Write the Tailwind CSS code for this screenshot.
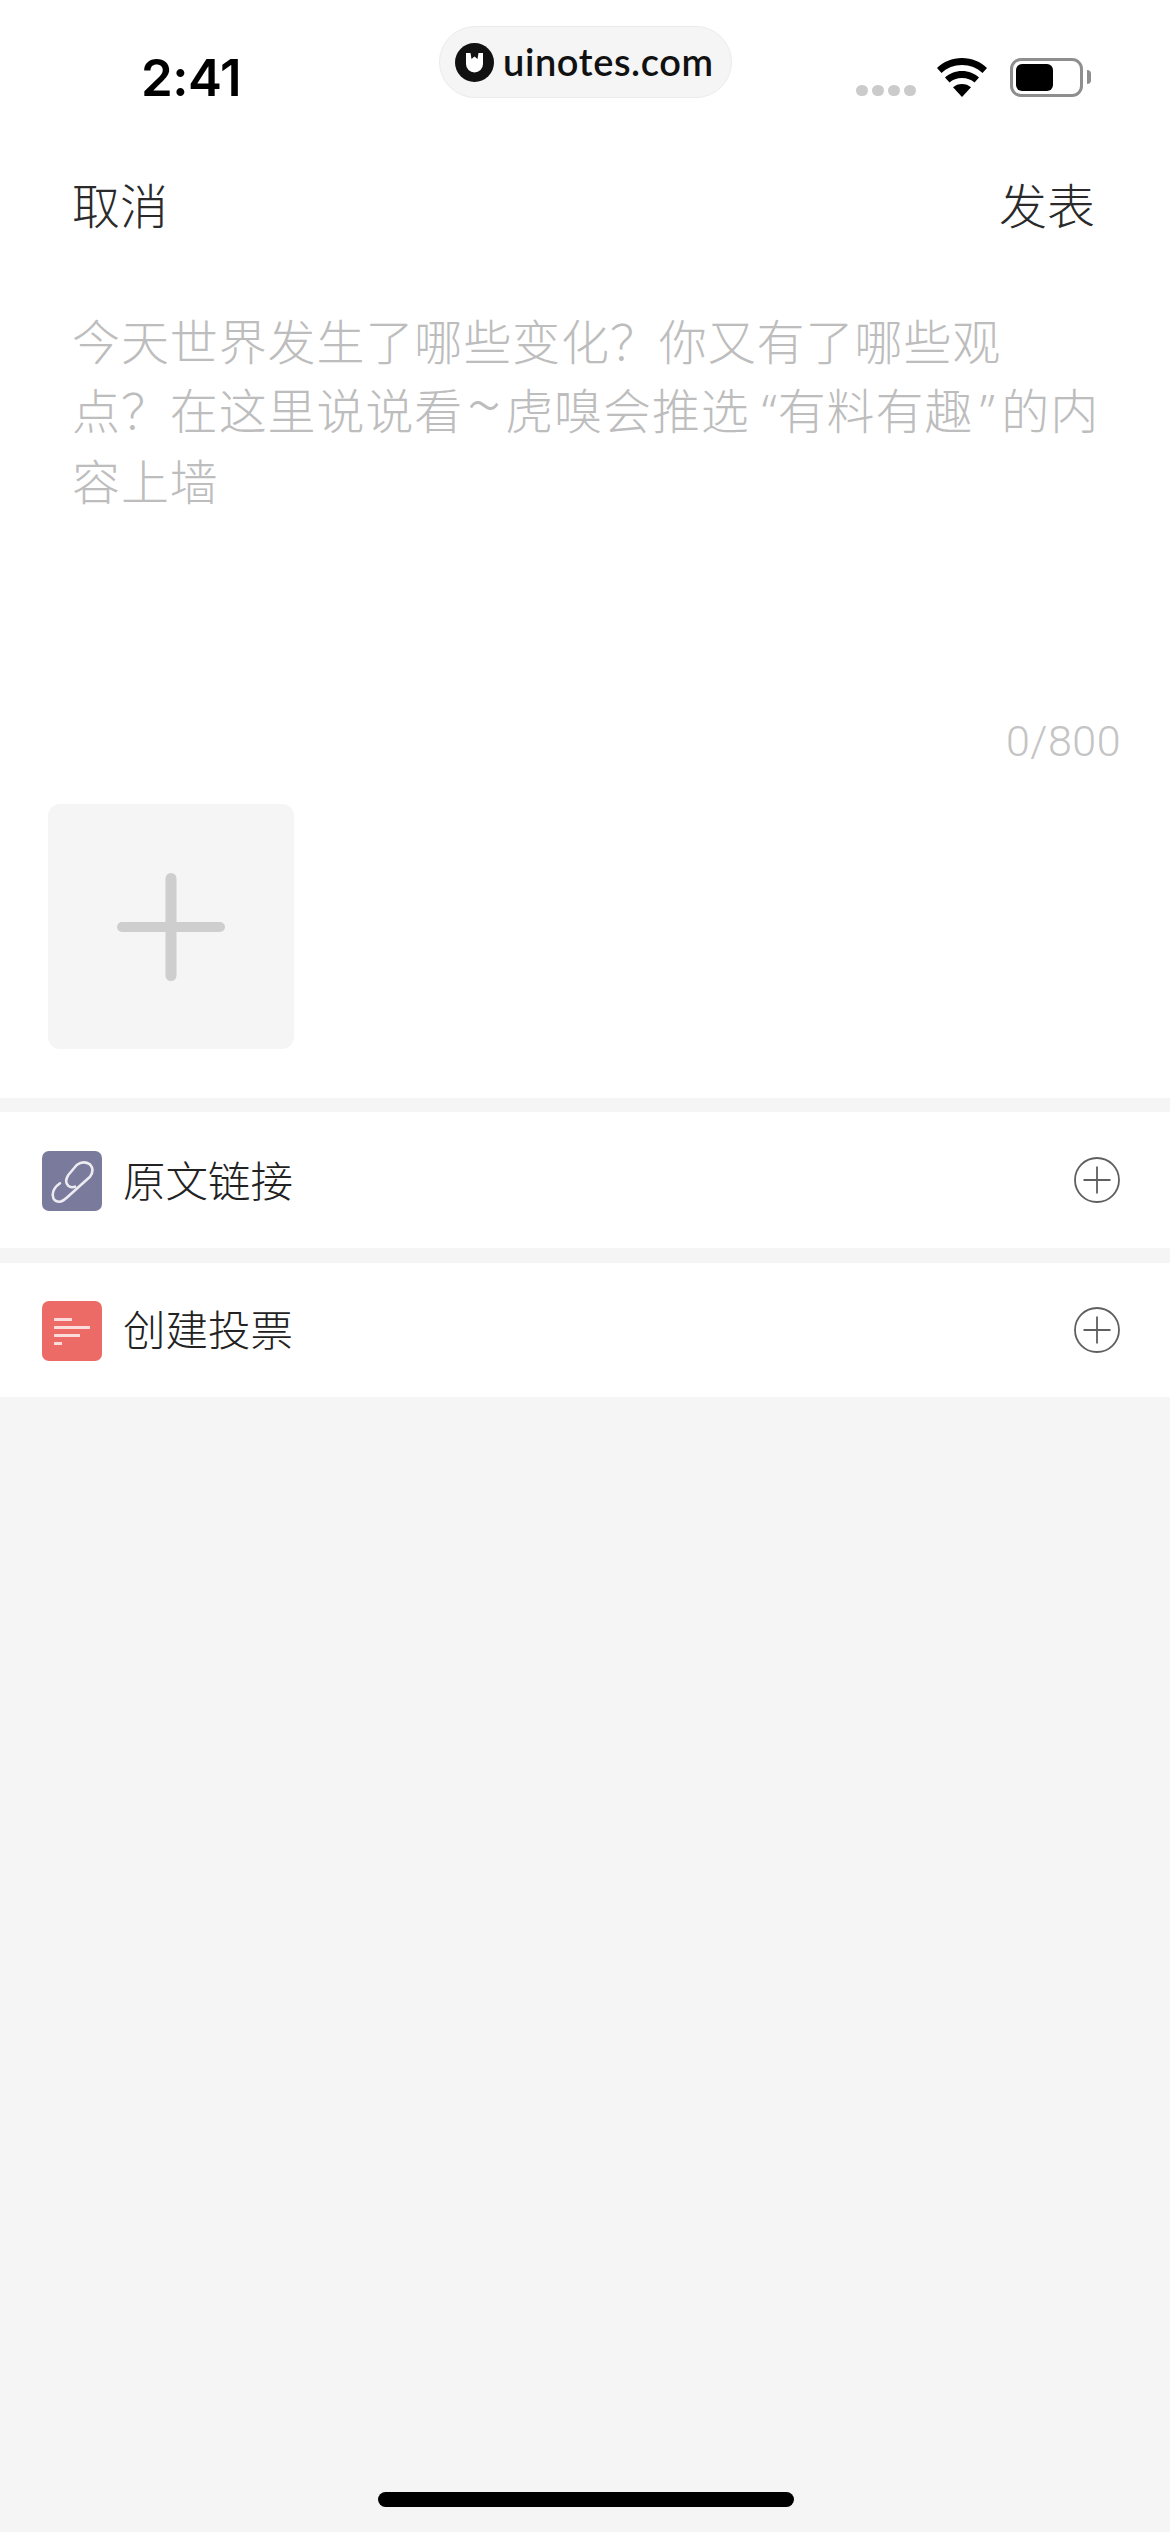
<!doctype html>
<html lang="zh-CN">
<head>
<meta charset="utf-8">
<script src="https://cdn.jsdelivr.net/npm/@tailwindcss/browser@4"></script>
</head>
<body class="m-0 bg-[#f5f5f5] font-['Noto_Sans_CJK_SC','Noto_Sans',sans-serif]">
<div class="relative w-[1170px] h-[2532px] overflow-hidden flex flex-col bg-[#f5f5f5]">
  <div class="bg-white h-[1098px] flex flex-col">
    <div class="relative h-[162px] shrink-0">
      <span class="absolute left-[141px] top-[45px] text-[51px] leading-[66px] font-semibold text-black font-['Inter',sans-serif] tracking-[-0.5px]">2:41</span>
      <div class="absolute left-[439px] top-[26px] w-[293px] h-[72px] rounded-[36px] bg-[#f5f5f5] border border-[#ebebeb] flex items-center pl-[15px] gap-[9px]">
        <svg width="39" height="39" viewBox="0 0 39 39"><circle cx="19.5" cy="19.5" r="19.500" fill="#111"/><path d="M11 10v11a8.500 8.500 0 0 0 17 0V10h-4.500l-1 6-3-2.500-3 2.500-1-6z" fill="#fff"/></svg>
        <span class="text-[38px] leading-[44px] pb-[3px] font-semibold tracking-[0.6px] text-[#111] font-['Lato',sans-serif]">uinotes.com</span>
      </div>
      <div class="absolute left-[856px] top-[85px] flex gap-[4px]">
        <i class="block w-[12px] h-[11px] rounded-full bg-[#cbcbcb]"></i><i class="block w-[12px] h-[11px] rounded-full bg-[#cbcbcb]"></i><i class="block w-[12px] h-[11px] rounded-full bg-[#cbcbcb]"></i><i class="block w-[12px] h-[11px] rounded-full bg-[#cbcbcb]"></i>
      </div>
      <svg class="absolute left-[936px] top-[58px]" width="52" height="39" viewBox="0 0 52 39"><path d="M26 0C16 0 7.500 3.700 1 10l4.500 5C11 9.800 18 7 26 7s15 2.800 20.500 8l4.500-5C44.500 3.700 36 0 26 0z" fill="#000"/><path d="M26 13c-6.800 0-12.500 2.500-17 6.500l4.500 5C16.800 21.500 21 20 26 20s9.200 1.500 12.500 4.500l4.500-5C38.500 15.500 32.800 13 26 13z" fill="#000"/><path d="M26 26c-3.600 0-6.600 1.200-9 3.300L26 39l9-9.700C32.600 27.200 29.600 26 26 26z" fill="#000"/></svg>
      <div class="absolute left-[1010px] top-[58px] w-[73px] h-[39px] rounded-[11px] border-[3px] border-[#8e8e8e] p-[3px]">
        <div class="w-[37px] h-full rounded-[6px] bg-black"></div>
      </div>
      <div class="absolute left-[1087px] top-[70px] w-[4px] h-[14px] rounded-r-full bg-[#8e8e8e]"></div>
    </div>
    <div class="flex justify-between pl-[72px] pr-[75px] h-[80px] text-[48px] leading-[82px] font-light text-[#2a2a2a] shrink-0">
      <span>取消</span><span>发表</span>
    </div>
    <p class="m-0 mt-[63px] pl-[72px] text-[48px] leading-[69px] tracking-[0.9px] font-light text-[#bdbdbd] whitespace-nowrap">今天世界发生了哪些变化&#xFF1F;你又有了哪些观<br>点&#xFF1F;在这里说说看<span class="inline-block w-[42px] text-center tracking-normal text-[64px] leading-[0]">~</span>虎嗅会推选<span class="inline-block w-[28px] text-right pr-[1px] tracking-normal font-['Noto_Sans',sans-serif]">“</span>有料有趣<span class="inline-block w-[28px] text-center tracking-normal font-['Noto_Sans',sans-serif]">”</span>的内<br>容上墙</p>
    <div class="mt-[201px] pr-[49px] text-right text-[43px] leading-[52px] font-light text-[#c4c4c4] font-['Roboto',sans-serif] tracking-[0.5px]">0/800</div>
    <div class="relative mt-[37px] ml-[48px] w-[246px] h-[245px] rounded-[12px] bg-[#f5f5f5] flex items-center justify-center">
      <svg width="108" height="108" viewBox="0 0 108 108"><rect x="0" y="49" width="108" height="10" rx="5" fill="#cecece"/><rect x="48.500" y="0" width="11" height="108" rx="5.500" fill="#cecece"/></svg>
    </div>
  </div>
  <div class="mt-[14px] h-[136px] bg-white flex items-center pl-[42px] pr-[50px] shrink-0">
    <div class="mt-[2px] w-[60px] h-[60px] rounded-[7px] bg-[#7a7a9c] flex items-center justify-center">
      <svg width="60" height="60" viewBox="0 0 60 60" fill="none" stroke="#ecebf2" stroke-width="2.600" stroke-linecap="round" stroke-linejoin="round"><path d="M18 32.300Q10.700 37.300 10.700 44Q11.300 51.300 18 50.700Q21.300 50 24.700 46.700L48 25.700Q53 19 48 13.300Q41.300 9 34.700 14L26.300 24Q22 30.700 26.300 34.700Q29.700 37.300 33 35.700"/></svg>
    </div>
    <span class="ml-[21px] pb-[3px] text-[42.500px] leading-[60px] font-light text-[#222]">原文链接</span>
    <svg class="ml-auto" width="46" height="46" viewBox="0 0 46 46" fill="none" stroke="#5f5f5f" stroke-width="1.800"><circle cx="23" cy="23" r="22"/><path d="M9.500 23h27M23 9.500v27"/></svg>
  </div>
  <div class="mt-[15px] h-[134px] bg-white flex items-center pl-[42px] pr-[50px] shrink-0">
    <div class="mt-[2px] w-[60px] h-[60px] rounded-[7px] bg-[#ed6b66] flex flex-col justify-center gap-[5px] pl-[12px]">
      <i class="block w-[18px] h-[3px] bg-[#fbdcda]"></i><i class="block w-[36px] h-[3px] bg-[#fbdcda]"></i><i class="block w-[26px] h-[3px] bg-[#fbdcda]"></i><i class="block w-[8px] h-[3px] bg-[#fbdcda]"></i>
    </div>
    <span class="ml-[21px] pb-[4px] text-[42.500px] leading-[60px] font-light text-[#222]">创建投票</span>
    <svg class="ml-auto" width="46" height="46" viewBox="0 0 46 46" fill="none" stroke="#5f5f5f" stroke-width="1.800"><circle cx="23" cy="23" r="22"/><path d="M9.500 23h27M23 9.500v27"/></svg>
  </div>
  <div class="absolute left-[378px] top-[2492px] w-[416px] h-[15px] rounded-full bg-black"></div>
</div>
</body>
</html>
